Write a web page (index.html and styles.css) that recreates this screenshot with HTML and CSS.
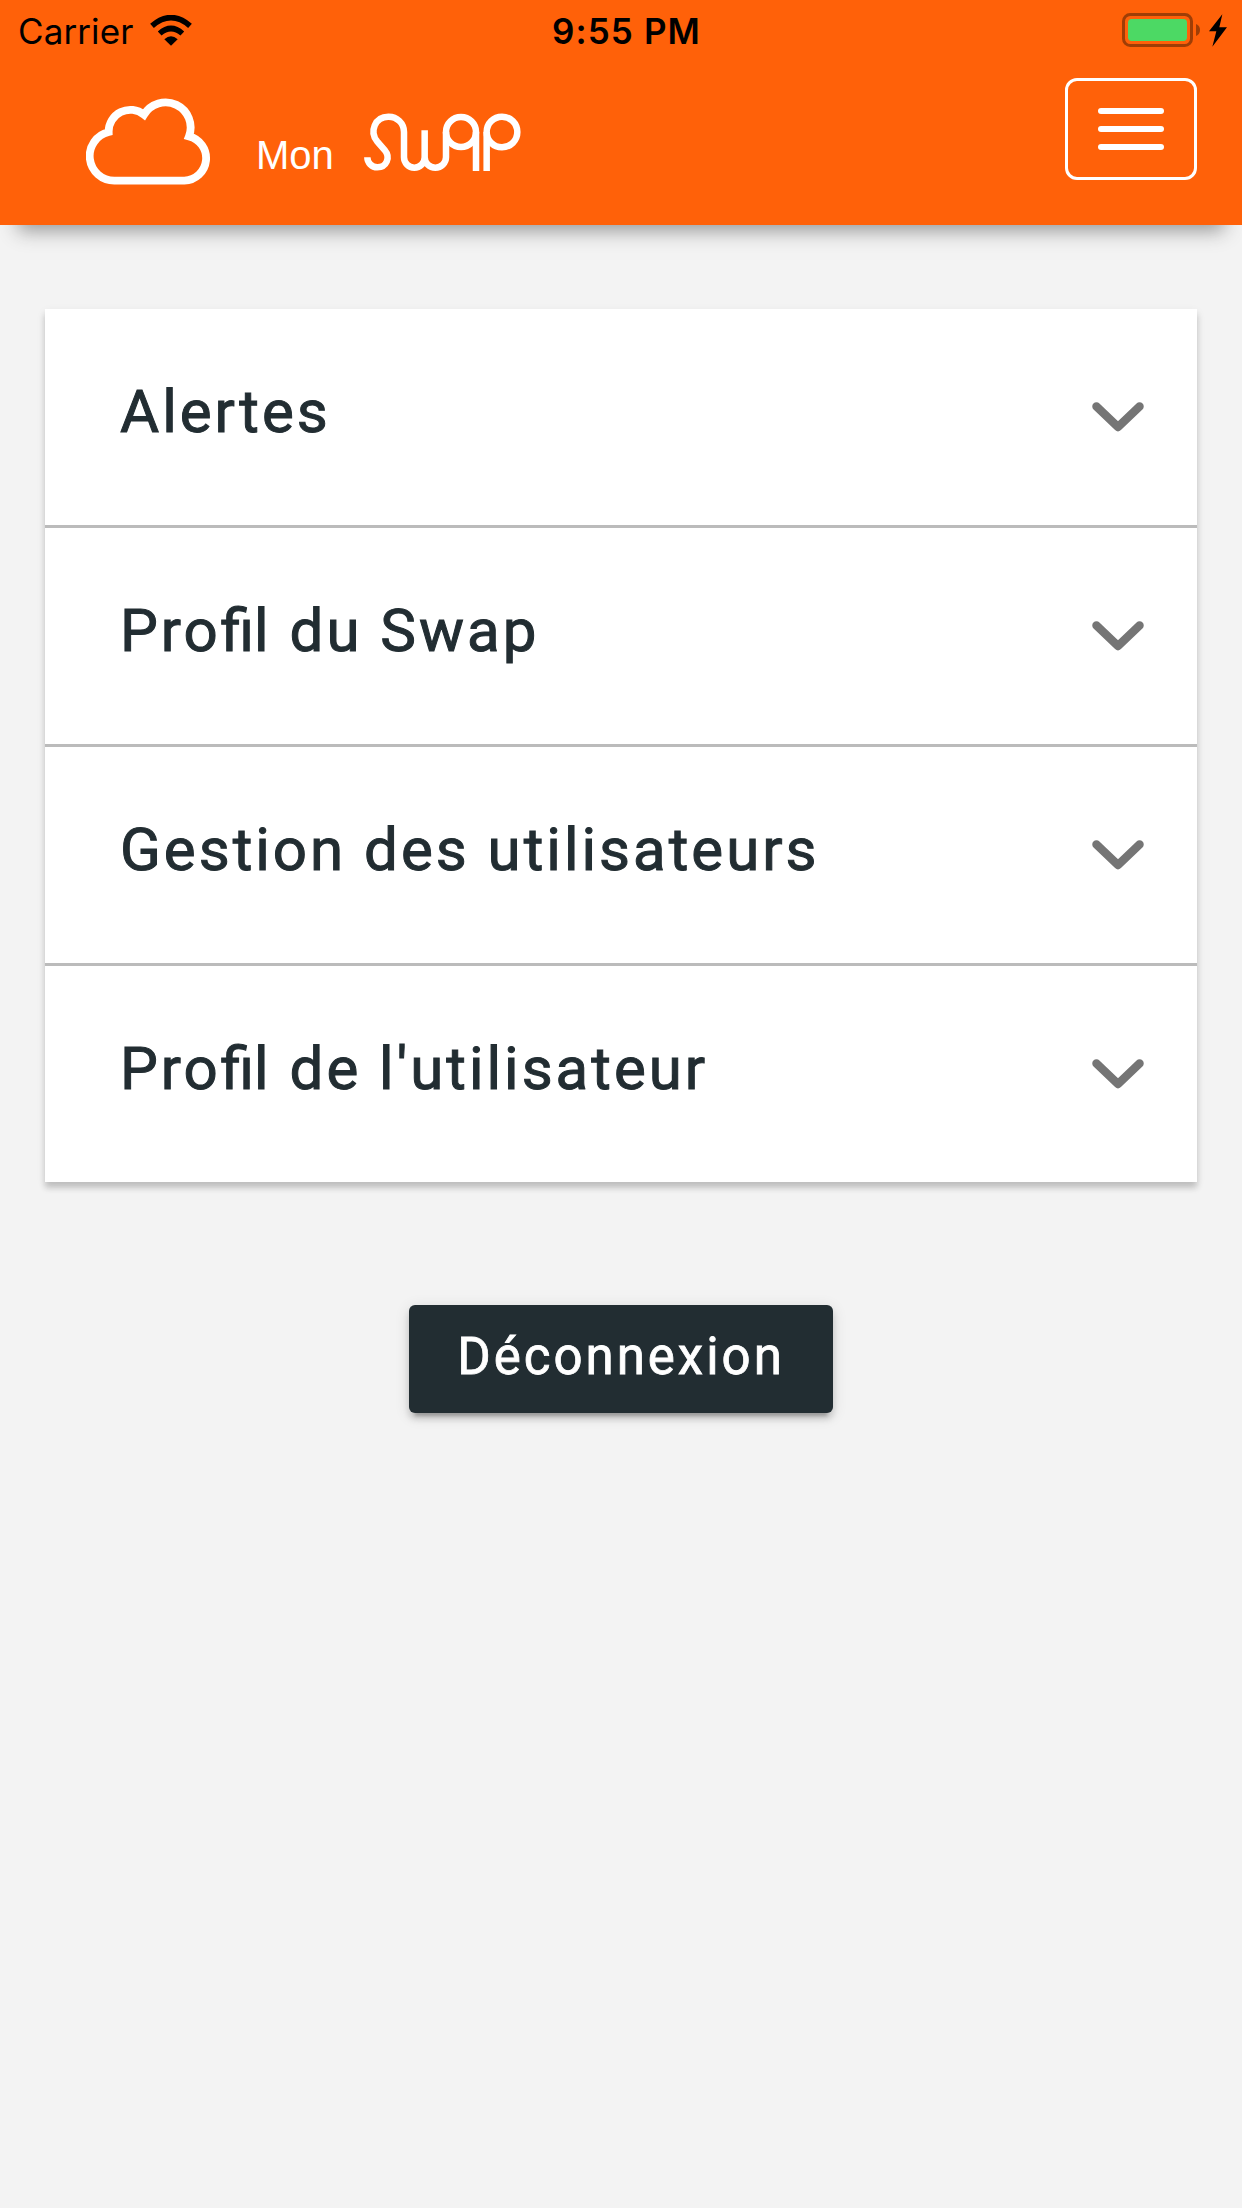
FILE: index.html
```html
<!DOCTYPE html>
<html lang="fr">
<head>
<meta charset="utf-8">
<title>Mon Swap</title>
<link rel="stylesheet" href="styles.css">
</head>
<body>
<header class="header">
  <div class="status">
    <div class="status-left">
      <span class="carrier">Carrier</span>
      <svg class="wifi" viewBox="450 44 126 92" aria-hidden="true">
        <path d="M513 136L493 116Q513 99 533 116Z"/>
        <path class="wave" d="M479 99Q513 69 547 99M456 76Q513 27 570 76"/>
      </svg>
    </div>
    <span class="time">9:55 PM</span>
    <div class="status-right">
      <svg class="battery" viewBox="246 39 315 102" aria-hidden="true">
        <rect class="case" x="250.5" y="43.5" width="204" height="93" rx="20"/>
        <rect class="charge" x="264" y="57" width="177" height="66" rx="11"/>
        <path class="tip" d="M468 72Q480 77 480 90Q480 103 468 108Z"/>
        <path d="M547 43L507 94H529L517 140L561 82H538Z"/>
      </svg>
    </div>
  </div>
  <div class="navbar">
    <a class="brand">
      <svg class="cloud" viewBox="258 294 375 264" aria-hidden="true">
        <path d="M344 542A74 74 0 0 1 326 396A65 65 0 0 1 432 344A75.200 75.200 0 0 1 567 409A67.500 67.500 0 0 1 553 542Z"/>
      </svg>
      <span class="mon">Mon</span>
      <svg class="swap" viewBox="370 95 480 180" role="img" aria-label="Swap">
        <path d="M383 231A30 30 0 0 0 413 261C440 261 454 232 435 209L413 184C388 154 406 109 446 109A46 46 0 0 1 493 155V231A31 31 0 0 0 555 231V150V231A32 31 0 0 0 619 231V155"/>
        <circle cx="664" cy="155" r="45"/>
        <path d="M709 155V272M741 272V155"/>
        <circle cx="787" cy="155" r="46"/>
      </svg>
    </a>
    <button class="toggler" aria-label="Menu"><i></i><i></i><i></i></button>
  </div>
</header>
<main class="main">
  <div class="accordion">
    <section class="panel"><h2>Alertes</h2><svg class="chevron" viewBox="0 0 52 30"><path d="M4.500 4.500L26 25L47.500 4.500"/></svg></section>
    <section class="panel"><h2>Pro<span class="lig">fi</span>l du Swap</h2><svg class="chevron" viewBox="0 0 52 30"><path d="M4.500 4.500L26 25L47.500 4.500"/></svg></section>
    <section class="panel"><h2>Gestion des utilisateurs</h2><svg class="chevron" viewBox="0 0 52 30"><path d="M4.500 4.500L26 25L47.500 4.500"/></svg></section>
    <section class="panel"><h2>Pro<span class="lig">fi</span>l de l'utilisateur</h2><svg class="chevron" viewBox="0 0 52 30"><path d="M4.500 4.500L26 25L47.500 4.500"/></svg></section>
  </div>
  <button class="logout">Déconnexion</button>
</main>
</body>
</html>
```
FILE: styles.css
```css
* { box-sizing: border-box; }
body {
  margin: 0;
  min-height: 2208px;
  background: #f3f3f3;
  color: #222d32;
  font-family: Roboto, sans-serif;
}
svg { display: block; flex: none; }

.header {
  height: 225px;
  background: #ff6109;
  box-shadow: 0 24px 18px -18px #999;
}
.status {
  display: grid;
  grid-template-columns: 1fr auto 1fr;
  height: 60px;
  padding: 0 15px 0 18px;
  color: #000;
  font-family: Inter, sans-serif;
  line-height: 62px;
}
.status-left { display: flex; }
.carrier { width: 132px; font-size: 35px; letter-spacing: .1px; }
.wifi { width: 42px; height: 31px; margin-top: 14.500px; }
.wave { fill: none; stroke: #000; stroke-width: 17; }
.time { padding-left: 8px; font-size: 35px; font-weight: 600; letter-spacing: 1.100px; }
.status-right { display: flex; justify-content: flex-end; }
.battery { width: 105px; height: 34px; margin-top: 13px; }
.case { fill: none; stroke: #9f3e06; stroke-width: 9; }
.charge { fill: #4cd964; }
.tip { fill: #9f3e06; }

.navbar {
  display: flex;
  justify-content: space-between;
  padding: 18px 45px 0 86px;
}
.brand { display: flex; padding-top: 20px; color: #fff; }
.cloud { width: 125px; height: 88px; }
.cloud path { fill: none; stroke: #fff; stroke-width: 23.500; }
.mon {
  width: 107px;
  margin: 34px 0 0 45px;
  font: 40px/46px "Liberation Sans", Arial, sans-serif;
}
.swap { width: 160px; height: 60px; margin-top: 13.700px; }
.swap path, .swap circle { fill: none; stroke: #fff; stroke-width: 19.500; }
.toggler {
  display: flex;
  flex-direction: column;
  align-items: center;
  gap: 12px;
  width: 132px;
  height: 102px;
  padding: 27px 0 0;
  border: 3px solid #fff;
  border-radius: 12px;
  background: none;
}
.toggler i { width: 66px; height: 6px; border-radius: 3px; background: #fff; }

.main {
  display: flex;
  flex-direction: column;
  align-items: center;
  padding: 84px 45px 0;
}
.accordion {
  display: flex;
  flex-direction: column;
  gap: 3px;
  width: 100%;
  background: #bbb;
  box-shadow: 0 6px 6px rgba(0, 0, 0, .17), 0 3px 9px rgba(0, 0, 0, .08);
}
.panel {
  display: flex;
  align-items: flex-start;
  justify-content: space-between;
  height: 216px;
  padding: 66px 53px 0 75px;
  background: #fff;
}
.panel h2 {
  margin: 0;
  font-size: 60px;
  font-weight: 400;
  line-height: 73px;
  letter-spacing: 3px;
  -webkit-text-stroke: 1px #222d32;
}
.lig { letter-spacing: 0; }
.chevron { width: 52px; height: 30px; margin-top: 27px; }
.chevron path {
  fill: none;
  stroke: #757575;
  stroke-width: 8.500;
  stroke-linecap: round;
  stroke-linejoin: round;
}
.logout {
  width: 424px;
  height: 108px;
  margin-top: 123px;
  padding: 0 0 4px;
  border: 0;
  border-radius: 6px;
  background: #222d32;
  color: #fff;
  font: 400 51px/60px Roboto, sans-serif;
  letter-spacing: 3px;
  -webkit-text-stroke: .8px #fff;
  box-shadow: 0 9px 3px -6px rgba(0, 0, 0, .2), 0 6px 6px 0 rgba(0, 0, 0, .14), 0 3px 15px 0 rgba(0, 0, 0, .12);
}
```
